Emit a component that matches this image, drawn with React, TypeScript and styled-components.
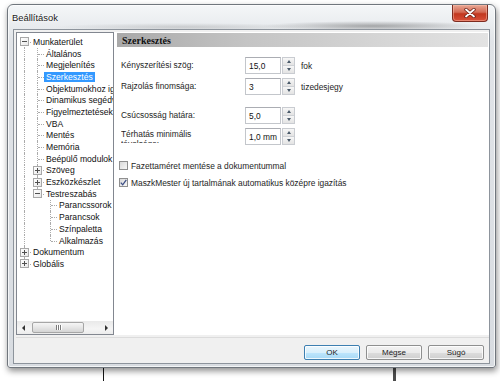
import React from 'react'
import styled, { createGlobalStyle } from 'styled-components'

const GlobalStyle = createGlobalStyle`
  html, body {
    margin: 0;
    padding: 0;
  }
  body {
    width: 500px;
    height: 381px;
    overflow: hidden;
    background: #fff;
    font-family: 'Liberation Sans', Arial, sans-serif;
    color: #1b1b1b;
  }
`

const Stage = styled.div`
  width: 500px;
  height: 381px;
  box-sizing: border-box;
  padding: 4px 0 0 7px;
  background:
    linear-gradient(#151515, #151515) 103px 360px / 1px 30px no-repeat,
    linear-gradient(#4c4c4c, #4c4c4c) 393px 360px / 3px 30px no-repeat,
    #fff;
`

const Window = styled.div`
  width: 489px;
  height: 364px;
  box-sizing: border-box;
  display: flex;
  flex-direction: column;
  padding: 0 5px 3px 5px;
  border: 1px solid #70767d;
  border-radius: 6px 6px 3px 3px;
  background: linear-gradient(180deg, #f4f6f8 0%, #e1e4e8 10%, #d8dce1 100%);
  box-shadow: inset 0 0 0 1px rgba(255, 255, 255, 0.7), 1px 3px 6px rgba(0, 0, 0, 0.45);
`

const TitleBar = styled.div`
  height: 24px;
  flex: none;
  display: flex;
  justify-content: space-between;
  align-items: flex-start;
  background:
    radial-gradient(ellipse 110px 5px at 360px 21px, rgba(60, 60, 60, 0.4), rgba(60, 60, 60, 0) 100%),
    radial-gradient(ellipse 130px 4px at 170px 22px, rgba(90, 90, 90, 0.22), rgba(90, 90, 90, 0) 100%);
`

const Title = styled.span`
  margin: 7px 0 0 -1px;
  font-size: 9.4px;
  line-height: 12px;
  color: #1a1a1a;
  text-shadow: 0 0 4px #fff, 0 0 2px #fff;
`

const CloseButton = styled.div`
  width: 36px;
  height: 17px;
  margin-right: 2px;
  box-sizing: border-box;
  display: flex;
  align-items: center;
  justify-content: center;
  border: 1px solid #7d2b20;
  border-top: none;
  border-radius: 0 0 4px 4px;
  background: linear-gradient(180deg, #e9a794 0%, #d46a55 45%, #c2371f 55%, #d9503a 100%);
  box-shadow: inset 0 0 0 1px rgba(255, 200, 180, 0.45);
`

const Client = styled.div`
  flex: 1;
  display: flex;
  flex-direction: column;
  padding: 2px 0 0 2px;
  background: #f0f0f0;
  border: 1px solid #8d949c;
`

const Main = styled.div`
  height: 303px;
  flex: none;
  display: flex;
`

const TreeBox = styled.div`
  width: 98px;
  flex: none;
  box-sizing: border-box;
  display: flex;
  flex-direction: column;
  background: #fff;
  border: 1px solid #828790;
`

const TreeList = styled.div`
  flex: 1;
  overflow: hidden;
  padding: 3px 0 0 1px;
`

const TreeRow = styled.div`
  height: 11.7px;
  display: flex;
  align-items: center;
  white-space: nowrap;
  font-size: 8.6px;
  color: #111;
`

const Guide = styled.span<{ $up?: boolean; $down?: boolean; $arm?: boolean }>`
  position: relative;
  flex: none;
  width: 13px;
  align-self: stretch;
  display: flex;
  align-items: center;
  justify-content: center;
  padding-right: 1px;
  box-sizing: border-box;

  &::before {
    content: '';
    position: absolute;
    left: 6px;
    top: ${(p) => (p.$up ? '0' : '50%')};
    bottom: ${(p) => (p.$down ? '0' : '50%')};
    border-left: 1px dotted #ababab;
    display: ${(p) => (p.$up || p.$down ? 'block' : 'none')};
  }

  &::after {
    content: '';
    position: absolute;
    left: 7px;
    right: 0;
    top: 50%;
    border-top: 1px dotted #ababab;
    display: ${(p) => (p.$arm ? 'block' : 'none')};
  }
`

const Expander = styled.span<{ $open: boolean }>`
  position: relative;
  z-index: 1;
  width: 7px;
  height: 7px;
  border: 1px solid #a8a8a8;
  background: linear-gradient(135deg, #fff 0%, #e8e8e8 100%);

  &::before {
    content: '';
    position: absolute;
    left: 1px;
    right: 1px;
    top: 3px;
    height: 1px;
    background: #505050;
  }

  &::after {
    content: '';
    position: absolute;
    top: 1px;
    bottom: 1px;
    left: 3px;
    width: 1px;
    background: #505050;
    display: ${(p) => (p.$open ? 'none' : 'block')};
  }
`

const NodeLabel = styled.span<{ $selected?: boolean }>`
  padding: 0 2px;
  line-height: 10px;
  background: ${(p) => (p.$selected ? '#3399ff' : 'transparent')};
  color: ${(p) => (p.$selected ? '#fff' : 'inherit')};
`

const HScroll = styled.div`
  height: 13px;
  flex: none;
  display: flex;
  align-items: center;
  background: linear-gradient(180deg, #e9e9e9 0%, #f5f5f5 60%, #ececec 100%);
`

const ArrowCell = styled.span<{ $dir: 'left' | 'right' }>`
  width: 13px;
  height: 13px;
  flex: none;
  display: flex;
  align-items: center;
  justify-content: center;

  &::before {
    content: '';
    width: 0;
    height: 0;
    border-top: 3px solid transparent;
    border-bottom: 3px solid transparent;
    ${(p) => (p.$dir === 'left' ? 'border-right: 3px solid #333;' : 'border-left: 3px solid #333;')}
  }
`

const Track = styled.span`
  flex: 1;
  height: 13px;
  padding-left: 2px;
  display: flex;
  align-items: center;
`

const Thumb = styled.span`
  width: 52px;
  height: 11px;
  box-sizing: border-box;
  display: flex;
  align-items: center;
  justify-content: center;
  gap: 1px;
  border: 1px solid #a6a6a6;
  border-radius: 2px;
  background: linear-gradient(180deg, #f6f6f6 0%, #e6e6e6 50%, #d4d4d4 100%);
`

const Grip = styled.span`
  width: 1px;
  height: 5px;
  background: #7a7a7a;
  box-shadow: 1px 0 0 #fff;
`

const Panel = styled.div`
  flex: 1;
  display: flex;
  flex-direction: column;
  padding: 1px 1px 0 3px;
  background: #fff;
`

const SectionHeader = styled.div`
  height: 14px;
  flex: none;
  display: flex;
  align-items: center;
  padding-left: 5px;
  font-family: 'Liberation Serif', 'Times New Roman', serif;
  font-weight: bold;
  font-size: 10px;
  color: #111;
  background: linear-gradient(90deg, #a9a9a9 0%, #c4c4c4 35%, #e3e3e3 100%);
`

const Form = styled.div`
  display: flex;
  flex-direction: column;
  padding: 10px 0 0 4px;
  font-size: 8.4px;
  color: #1e1e1e;
`

const FieldRow = styled.div<{ $gap: number }>`
  height: 17px;
  margin-top: ${(p) => p.$gap}px;
  display: flex;
  align-items: center;
`

const FieldLabel = styled.span<{ $clip?: boolean }>`
  width: 124px;
  flex: none;
  box-sizing: border-box;
  line-height: 11px;
  ${(p) =>
    p.$clip
      ? 'height: 15px; line-height: 10px; padding: 1px 16px 0 0; overflow: hidden; align-self: flex-start;'
      : ''}
`

const Field = styled.div`
  width: 36px;
  height: 17px;
  box-sizing: border-box;
  display: flex;
  align-items: center;
  padding-left: 3px;
  border: 1px solid #c3c6cb;
  border-top-color: #abadb3;
  background: #fff;
  color: #111;
`

const Spinner = styled.div`
  width: 13px;
  height: 17px;
  margin-left: 1px;
  box-sizing: border-box;
  display: flex;
  flex-direction: column;
  border: 1px solid #c9ccd1;
`

const SpinHalf = styled.span<{ $up?: boolean }>`
  flex: 1;
  display: flex;
  align-items: center;
  justify-content: center;
  background: linear-gradient(180deg, #f7f7f7 0%, #e3e3e3 100%);
  border-bottom: ${(p) => (p.$up ? '1px solid #cfd2d6' : 'none')};

  &::before {
    content: '';
    width: 0;
    height: 0;
    border-left: 2.5px solid transparent;
    border-right: 2.5px solid transparent;
    ${(p) => (p.$up ? 'border-bottom: 3px solid #4a5a6a;' : 'border-top: 3px solid #4a5a6a;')}
  }
`

const Unit = styled.span`
  margin-left: 6px;
`

const CheckRow = styled.div<{ $gap: number }>`
  height: 17px;
  margin-top: ${(p) => p.$gap}px;
  margin-left: -2px;
  display: flex;
  align-items: center;
  gap: 3px;
`

const Box = styled.span`
  width: 9px;
  height: 9px;
  box-sizing: border-box;
  display: flex;
  align-items: center;
  justify-content: center;
  border: 1px solid #8f8f8f;
  background: linear-gradient(135deg, #d9d9d9 0%, #f7f7f7 100%);
`

const Footer = styled.div`
  flex: 1;
  margin-top: 2px;
  display: flex;
  justify-content: flex-end;
  align-items: flex-start;
  gap: 6px;
  padding: 7px 5px 0 0;
  border-top: 1px solid #dcdcdc;
`

const Button = styled.div<{ $primary?: boolean }>`
  width: 56px;
  height: 15px;
  box-sizing: border-box;
  display: flex;
  align-items: center;
  justify-content: center;
  font-size: 8px;
  color: #222;
  border: 1px solid ${(p) => (p.$primary ? '#3c7fb1' : '#8e8f8f')};
  border-radius: 2px;
  background: ${(p) =>
    p.$primary
      ? 'linear-gradient(180deg, #eaf6fd 0%, #d9f0fc 50%, #bee6fd 51%, #a7d9f5 100%)'
      : 'linear-gradient(180deg, #f2f2f2 0%, #ebebeb 50%, #dddddd 51%, #cfcfcf 100%)'};
  box-shadow: inset 0 0 0 1px rgba(255, 255, 255, 0.8);
`

type G = { up?: boolean; down?: boolean; arm?: boolean; box?: 'open' | 'closed' }

const pipe: G = { up: true, down: true }
const tee: G = { up: true, down: true, arm: true }
const elbow: G = { up: true, arm: true }
const blank: G = {}

type Node = { label: string; guides: G[]; selected?: boolean }

const nodes: Node[] = [
  { label: 'Munkaterület', guides: [{ down: true, box: 'open', arm: true }] },
  { label: 'Általános', guides: [pipe, tee] },
  { label: 'Megjelenítés', guides: [pipe, tee] },
  { label: 'Szerkesztés', guides: [pipe, tee], selected: true },
  { label: 'Objektumokhoz igazítás', guides: [pipe, tee] },
  { label: 'Dinamikus segédvonalak', guides: [pipe, tee] },
  { label: 'Figyelmeztetések', guides: [pipe, tee] },
  { label: 'VBA', guides: [pipe, tee] },
  { label: 'Mentés', guides: [pipe, tee] },
  { label: 'Memória', guides: [pipe, tee] },
  { label: 'Beépülő modulok', guides: [pipe, tee] },
  { label: 'Szöveg', guides: [pipe, { ...tee, box: 'closed' }] },
  { label: 'Eszközkészlet', guides: [pipe, { ...tee, box: 'closed' }] },
  { label: 'Testreszabás', guides: [pipe, { up: true, arm: true, box: 'open' }] },
  { label: 'Parancssorok', guides: [pipe, blank, tee] },
  { label: 'Parancsok', guides: [pipe, blank, tee] },
  { label: 'Színpaletta', guides: [pipe, blank, tee] },
  { label: 'Alkalmazás', guides: [pipe, blank, elbow] },
  { label: 'Dokumentum', guides: [{ ...tee, box: 'closed' }] },
  { label: 'Globális', guides: [{ up: true, arm: true, box: 'closed' }] },
]

const fields = [
  { label: 'Kényszerítési szög:', value: '15,0', unit: 'fok', gap: 0 },
  { label: 'Rajzolás finomsága:', value: '3', unit: 'tizedesjegy', gap: 4 },
  { label: 'Csúcsosság határa:', value: '5,0', unit: '', gap: 12 },
  { label: 'Térhatás minimális távolsága:', value: '1,0 mm', unit: '', gap: 4, clip: true },
]

const checks = [
  { label: 'Fazettaméret mentése a dokumentummal', checked: false, gap: 12 },
  { label: 'MaszkMester új tartalmának automatikus középre igazítás', checked: true, gap: 0 },
]

const CloseGlyph = () => (
  <svg width="12" height="10" viewBox="0 0 12 10">
    <path d="M2 1.5 L10 8.5 M10 1.5 L2 8.5" stroke="#6b2015" strokeWidth="3.4" strokeLinecap="round" />
    <path d="M2 1.5 L10 8.5 M10 1.5 L2 8.5" stroke="#fff" strokeWidth="1.8" strokeLinecap="round" />
  </svg>
)

const CheckGlyph = () => (
  <svg width="7" height="7" viewBox="0 0 7 7">
    <path d="M0.8 3.6 L2.7 5.8 L6.3 0.8" fill="none" stroke="#3d4f86" strokeWidth="1.3" />
  </svg>
)

const App: React.FC = () => {
  return (
    <Stage>
      <GlobalStyle />
      <Window>
        <TitleBar>
          <Title>Beállítások</Title>
          <CloseButton>
            <CloseGlyph />
          </CloseButton>
        </TitleBar>
        <Client>
          <Main>
            <TreeBox>
              <TreeList>
                {nodes.map((n) => (
                  <TreeRow key={n.label}>
                    {n.guides.map((g, i) => (
                      <Guide key={i} $up={g.up} $down={g.down} $arm={g.arm}>
                        {g.box && <Expander $open={g.box === 'open'} />}
                      </Guide>
                    ))}
                    <NodeLabel $selected={n.selected}>{n.label}</NodeLabel>
                  </TreeRow>
                ))}
              </TreeList>
              <HScroll>
                <ArrowCell $dir="left" />
                <Track>
                  <Thumb>
                    <Grip />
                    <Grip />
                    <Grip />
                  </Thumb>
                </Track>
                <ArrowCell $dir="right" />
              </HScroll>
            </TreeBox>
            <Panel>
              <SectionHeader>Szerkesztés</SectionHeader>
              <Form>
                {fields.map((f) => (
                  <FieldRow key={f.label} $gap={f.gap}>
                    <FieldLabel $clip={f.clip}>{f.label}</FieldLabel>
                    <Field>{f.value}</Field>
                    <Spinner>
                      <SpinHalf $up />
                      <SpinHalf />
                    </Spinner>
                    {f.unit && <Unit>{f.unit}</Unit>}
                  </FieldRow>
                ))}
                {checks.map((c) => (
                  <CheckRow key={c.label} $gap={c.gap}>
                    <Box>{c.checked && <CheckGlyph />}</Box>
                    <span>{c.label}</span>
                  </CheckRow>
                ))}
              </Form>
            </Panel>
          </Main>
          <Footer>
            <Button $primary>OK</Button>
            <Button>Mégse</Button>
            <Button>Súgó</Button>
          </Footer>
        </Client>
      </Window>
    </Stage>
  )
}

export default App
